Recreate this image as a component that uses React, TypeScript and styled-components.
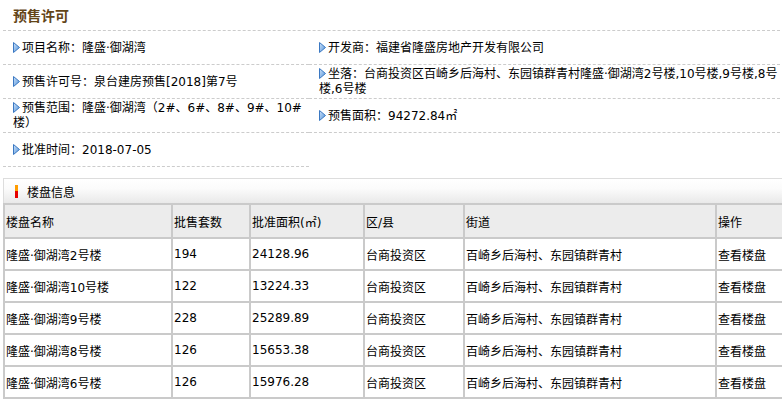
import React from 'react';
import styled, { createGlobalStyle } from 'styled-components';

const GlobalStyle = createGlobalStyle`
  html, body {
    margin: 0;
    padding: 0;
    background: #fff;
    overflow: hidden;
  }
  body {
    font-family: "DejaVu Sans", "Noto Sans CJK SC", sans-serif;
    font-size: 12px;
    color: #000;
  }
  * {
    box-sizing: border-box;
  }
`;

const Page = styled.div`
  width: 800px;
  padding-left: 3px;
`;

const TitleBar = styled.div`
  height: 31px;
  display: flex;
  align-items: center;
  padding-left: 10px;
  border-bottom: 1px dashed #ccc;
  font-size: 14px;
  font-weight: bold;
  color: #634518;
  font-family: "Noto Sans CJK SC", sans-serif;
`;

const InfoGrid = styled.div`
  display: grid;
  grid-template-columns: 306px 476px;
`;

const InfoItem = styled.div`
  display: flex;
  align-items: center;
  min-height: 34px;
  padding: 2px 4px 1px 10px;
  border-bottom: 1px dashed #ccc;
  line-height: 15px;
`;

const InfoText = styled.div`
  word-break: break-all;
`;

const Arrow = styled.svg`
  width: 7px;
  height: 11px;
  margin-right: 2px;
  vertical-align: -1px;
`;

const Box = styled.div`
  margin-top: 11px;
  border: 1px solid #ddd;
  border-bottom: none;
`;

const BoxHeader = styled.div`
  height: 24px;
  display: flex;
  align-items: center;
  padding-left: 11px;
  background: linear-gradient(#fff 0%, #fbfbfb 40%, #e9e9e9 100%);
`;

const Marker = styled.span`
  display: inline-block;
  width: 3px;
  height: 13px;
  margin-right: 9px;
  background: linear-gradient(#ff9c00 0%, #ff9c00 48%, #e60000 48%, #e60000 100%);
`;

const Table = styled.table`
  border-collapse: collapse;
  table-layout: fixed;
  width: 797px;
`;

const Cell = styled.td<{ $head?: boolean }>`
  border: 2px solid #cacaca;
  height: ${({ $head }) => ($head ? '34px' : '32px')};
  padding: 0 1px;
  background: ${({ $head }) => ($head ? '#ececec' : '#fff')};
  white-space: nowrap;
  overflow: hidden;
  font-weight: normal;
  text-align: left;
`;

const widths = [168, 78, 114, 100, 252, 85];

const heads = ['楼盘名称', '批售套数', '批准面积(㎡)', '区/县', '街道', '操作'];

const rows = [
  ['隆盛·御湖湾2号楼', '194', '24128.96'],
  ['隆盛·御湖湾10号楼', '122', '13224.33'],
  ['隆盛·御湖湾9号楼', '228', '25289.89'],
  ['隆盛·御湖湾8号楼', '126', '15653.38'],
  ['隆盛·御湖湾6号楼', '126', '15976.28'],
];

const info: (string | null)[] = [
  '项目名称：隆盛·御湖湾',
  '开发商：福建省隆盛房地产开发有限公司',
  '预售许可号：泉台建房预售[2018]第7号',
  '坐落：台商投资区百崎乡后海村、东园镇群青村隆盛·御湖湾2号楼,10号楼,9号楼,8号楼,6号楼',
  '预售范围：隆盛·御湖湾（2#、6#、8#、9#、10#楼）',
  '预售面积：94272.84㎡',
  '批准时间：2018-07-05',
];

const ArrowIcon: React.FC = () => (
  <Arrow viewBox="0 0 7 11">
    <defs>
      <linearGradient id="arr" x1="0" y1="0" x2="1" y2="1">
        <stop offset="0" stopColor="#cfe4fb" />
        <stop offset="1" stopColor="#4f8fd6" />
      </linearGradient>
    </defs>
    <polygon points="0.5,0.5 6.5,5.5 0.5,10.5" fill="url(#arr)" stroke="#3b78c2" strokeWidth="1" />
  </Arrow>
);

export default function App() {
  return (
    <Page>
      <GlobalStyle />
      <TitleBar>预售许可</TitleBar>
      <InfoGrid>
        {info.map((t, i) => (
          <InfoItem key={i}>
            <InfoText>
              <ArrowIcon />
              {t}
            </InfoText>
          </InfoItem>
        ))}
      </InfoGrid>
      <Box>
        <BoxHeader>
          <Marker />
          楼盘信息
        </BoxHeader>
      </Box>
      <Table>
        <colgroup>
          {widths.map((w, i) => (
            <col key={i} style={{ width: w }} />
          ))}
        </colgroup>
        <thead>
          <tr>
            {heads.map((h) => (
              <Cell as="th" $head key={h}>
                {h}
              </Cell>
            ))}
          </tr>
        </thead>
        <tbody>
          {rows.map((r) => (
            <tr key={r[0]}>
              <Cell>{r[0]}</Cell>
              <Cell>{r[1]}</Cell>
              <Cell>{r[2]}</Cell>
              <Cell>台商投资区</Cell>
              <Cell>百崎乡后海村、东园镇群青村</Cell>
              <Cell>查看楼盘</Cell>
            </tr>
          ))}
        </tbody>
      </Table>
    </Page>
  );
}
